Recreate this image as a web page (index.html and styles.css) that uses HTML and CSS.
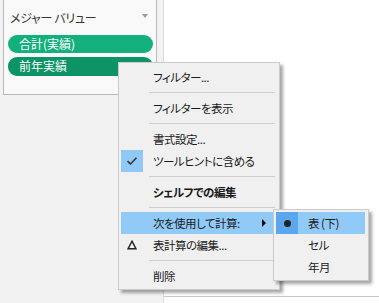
FILE: index.html
```html
<!DOCTYPE html>
<html lang="ja">

<head>
    <meta charset="UTF-8">
    <title>メジャー バリュー</title>
    <link rel="stylesheet" href="styles.css">
</head>

<body>
    <div class="page">
        <div class="side">
            <div class="card">
                <div class="card-head">
                    <span>メジャー バリュー</span>
                    <span class="drop"></span>
                </div>
                <div class="pill pill-sum">合計(実績)</div>
                <div class="pill pill-prev">前年実績</div>
            </div>
        </div>
        <div class="canvas">
            <div class="canvas-box"></div>
        </div>
    </div>

    <ul class="menu">
        <li class="item"><span class="ico"></span>フィルター...</li>
        <li class="sep"></li>
        <li class="item"><span class="ico"></span>フィルターを表示</li>
        <li class="sep"></li>
        <li class="item"><span class="ico"></span>書式設定...</li>
        <li class="item"><span class="ico checked">
                <svg width="12" height="10" viewBox="0 0 12 10">
                    <path d="M1.5 5.2 L4.5 8 L10.5 1.8" fill="none" stroke="#333" stroke-width="1.6" />
                </svg>
            </span>ツールヒントに含める</li>
        <li class="sep"></li>
        <li class="item bold"><span class="ico"></span>シェルフでの編集</li>
        <li class="sep"></li>
        <li class="item active"><span class="ico"></span>次を使用して計算:<span class="arrow"></span></li>
        <li class="item"><span class="ico">
                <svg width="10" height="10" viewBox="0 0 10 10">
                    <path d="M5 1.2 L9 8.8 L1 8.8 Z" fill="none" stroke="#222" stroke-width="1.4" />
                </svg>
            </span>表計算の編集...</li>
        <li class="sep"></li>
        <li class="item"><span class="ico"></span>削除</li>
    </ul>

    <ul class="menu submenu">
        <li class="item active"><span class="ico dot"><i></i></span>表 (下)</li>
        <li class="item"><span class="ico"></span>セル</li>
        <li class="item"><span class="ico"></span>年月</li>
    </ul>
</body>

</html>
```

FILE: styles.css
```css
html,
body {
    margin: 0;
    width: 379px;
    height: 303px;
    overflow: hidden;
    background: #ffffff;
    font-family: "Noto Sans CJK JP", "Noto Sans", sans-serif;
    font-feature-settings: "palt";
    font-size: 12px;
    color: #1a1a1a;
}

.page {
    display: flex;
    height: 303px;
}

.side {
    width: 163px;
    background: #f2f2f2;
    border-right: 1px solid #dcdcdc;
}

.card {
    margin: -1px 0 0 3px;
    width: 146px;
    height: 94px;
    padding: 0 3px 0 3px;
    background: #f9f9f9;
    border: 1px solid #b9b9b9;
}

.card-head {
    display: flex;
    justify-content: space-between;
    align-items: center;
    height: 35px;
    padding: 0 3px 0 3px;
    color: #333;
    letter-spacing: -0.3px;
}

.drop {
    width: 0;
    height: 0;
    margin: 0 2px 3px 0;
    border-left: 3.5px solid transparent;
    border-right: 3.5px solid transparent;
    border-top: 4px solid #9a9a9a;
}

.pill {
    height: 18px;
    line-height: 18px;
    margin: 0 0 4px 1px;
    padding-left: 11px;
    border-radius: 9px;
    color: #fff;
    font-size: 12px;
}

.pill-sum {
    background: #13b07e;
}

.pill-prev {
    background: #0c9467;
    height: 19px;
}

.canvas {
    flex: 1;
    display: flex;
    flex-direction: column;
    justify-content: flex-end;
}

.canvas-box {
    height: 6px;
    border-top: 1px solid #c8c8c8;
}

/* context menu */
.menu {
    position: absolute;
    left: 118px;
    top: 62px;
    width: 155px;
    margin: 0;
    padding: 3px 3px 2px 2px;
    list-style: none;
    background: #f0f0f0;
    border: 1px solid #cbcbcb;
    box-shadow: 3px 3px 3px rgba(0, 0, 0, 0.35);
    font-size: 11.5px;
    letter-spacing: -0.5px;
}

.item {
    display: flex;
    align-items: center;
    height: 22px;
    position: relative;
}

.ico {
    display: flex;
    align-items: center;
    justify-content: center;
    width: 22px;
    height: 22px;
    margin-right: 10px;
}

.checked {
    background: #90c8f6;
}

.bold {
    font-weight: bold;
}

.active {
    background: #91c9f7;
}

.arrow {
    position: absolute;
    right: 10px;
    top: 7px;
    width: 0;
    height: 0;
    border-top: 4px solid transparent;
    border-bottom: 4px solid transparent;
    border-left: 4px solid #000;
}

.sep {
    height: 9px;
    display: flex;
    align-items: center;
}

.sep::after {
    content: "";
    display: block;
    margin-left: 28px;
    width: 126px;
    height: 1px;
    background: #cdcdcd;
}

.submenu {
    left: 273px;
    top: 209px;
    width: 89px;
    padding: 2px 3px 2px 2px;
}

.dot {
    background: #5aa7ee;
}

.dot i {
    width: 7px;
    height: 7px;
    border-radius: 50%;
    background: #222;
}
```
